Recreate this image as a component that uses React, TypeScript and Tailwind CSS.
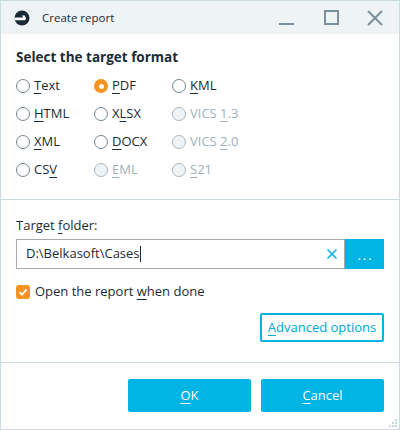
import React from "react";

const BLUE = "#00b4e4";

type Fmt = { label: string; key: number; checked?: boolean; disabled?: boolean };

const rows: Fmt[][] = [
  [{ label: "Text", key: 0 }, { label: "PDF", key: 0, checked: true }, { label: "KML", key: 0 }],
  [{ label: "HTML", key: 0 }, { label: "XLSX", key: 1 }, { label: "VICS 1.3", key: 5, disabled: true }],
  [{ label: "XML", key: 0 }, { label: "DOCX", key: 0 }, { label: "VICS 2.0", key: 5, disabled: true }],
  [{ label: "CSV", key: 2 }, { label: "EML", key: 0, disabled: true }, { label: "S21", key: 0, disabled: true }],
];

const Accel = ({ text, k }: { text: string; k: number }) => (
  <>
    {text.slice(0, k)}
    <span className="underline underline-offset-[3px] decoration-1">{text[k]}</span>
    {text.slice(k + 1)}
  </>
);

const Radio = ({ f }: { f: Fmt }) => (
  <label className={`flex items-center gap-[4px] h-[28px] ${f.disabled ? "text-[#9fb0ba]" : "text-[#1b2b36]"}`}>
    {f.checked ? (
      <span className="w-[14px] h-[14px] rounded-full bg-[#f7931e] flex items-center justify-center">
        <span className="w-[5px] h-[5px] rounded-full bg-white" />
      </span>
    ) : (
      <span
        className={`w-[14px] h-[14px] rounded-full border ${
          f.disabled ? "border-[#a8b8c1] bg-[#eef3f6]" : "border-[#6f8590] bg-white"
        }`}
      />
    )}
    <span>
      <Accel text={f.label} k={f.key} />
    </span>
  </label>
);

const Logo = () => (
  <svg width="16" height="16" viewBox="0 0 16 16">
    <circle cx="8" cy="8" r="7.5" fill="#1b2b36" />
    <path d="M0.4 7.6 L9.2 7.6 L7.8 5.4 L10.6 5.4 L12.2 8.6 L11 10.2 L0.8 10.2 Z" fill="#fff" />
  </svg>
);

export default function App() {
  return (
    <div
      className="w-[400px] h-[430px] bg-white border border-[#cbdbe2] flex flex-col text-[13px] text-[#1b2b36] relative"
      style={{ fontFamily: '"Open Sans", "Noto Sans", sans-serif' }}
    >
      {/* Title bar */}
      <div className="h-[33px] bg-[#eef3f6] flex items-center pl-[13px] shrink-0">
        <Logo />
        <span className="ml-[12px] text-[11.5px] text-[#1b2b36]">Create report</span>
        <div className="ml-auto flex items-center h-full">
          <div className="w-[45px] h-full flex items-center justify-center">
            <span className="block w-[15px] h-[2px] bg-[#7a919c] mt-[12px]" />
          </div>
          <div className="w-[45px] h-full flex items-center justify-center">
            <span className="block w-[15px] h-[15px] border-2 border-[#7a919c]" />
          </div>
          <div className="w-[45px] h-full flex items-center justify-center pr-[4px]">
            <svg width="16" height="16" viewBox="0 0 16 16">
              <path d="M1 1 L15 15 M15 1 L1 15" stroke="#7a919c" strokeWidth="2" />
            </svg>
          </div>
        </div>
      </div>

      {/* Format section */}
      <div className="px-[15px] pt-[13px] pb-[15px] border-b border-[#cbdbe2]">
        <div className="text-[13.5px] font-bold leading-[20px]">Select the target format</div>
        <div className="mt-[5px] grid grid-cols-[78px_78px_1fr]">
          {rows.flat().map((f) => (
            <Radio key={f.label} f={f} />
          ))}
        </div>
      </div>

      {/* Folder section */}
      <div className="px-[15px] pt-[16px] flex-1 flex flex-col border-b border-[#cbdbe2]">
        <div className="leading-[18px]">
          Target <Accel text="folder:" k={0} />
        </div>
        <div className="mt-[5px] flex h-[30px]">
          <div className="flex-1 flex items-center border border-[#a9a9a9] pl-[9px] pr-[6px]">
            <span>D:\Belkasoft\Cases</span>
            <span className="w-px h-[16px] bg-[#1b2b36]" />
            <svg className="ml-auto" width="12" height="12" viewBox="0 0 12 12">
              <path d="M1.5 1.5 L10.5 10.5 M10.5 1.5 L1.5 10.5" stroke={BLUE} strokeWidth="1.5" />
            </svg>
          </div>
          <button className="w-[39px] h-full bg-[#00b4e4] text-white text-[13px] leading-none tracking-[2px] pl-[2px] pt-[3px]">...</button>
        </div>
        <label className="mt-[13px] flex items-center gap-[5px] h-[20px]">
          <span className="w-[14px] h-[14px] rounded-[3px] bg-[#f7931e] flex items-center justify-center">
            <svg width="10" height="10" viewBox="0 0 10 10">
              <path d="M1.5 5.2 L4 7.6 L8.6 2.4" stroke="#fff" strokeWidth="1.8" fill="none" />
            </svg>
          </span>
          <span>
            Open the report <Accel text="when" k={0} /> done
          </span>
        </label>
        <div className="mt-[11px] flex justify-end">
          <button className="h-[29px] w-[124px] border-2 border-[#00b4e4] rounded-[2px] text-[#00a6d6] text-[13px]">
            <Accel text="Advanced options" k={0} />
          </button>
        </div>
      </div>

      {/* Buttons */}
      <div className="h-[66px] shrink-0 flex justify-end items-start pt-[16px] pr-[15px] gap-[10px]">
        <button className="w-[123px] h-[33px] bg-[#00b4e4] rounded-[2px] text-white text-[13px]">
          <Accel text="OK" k={0} />
        </button>
        <button className="w-[123px] h-[33px] bg-[#00b4e4] rounded-[2px] text-white text-[13px]">
          <Accel text="Cancel" k={0} />
        </button>
      </div>

      {/* Resize grip */}
      <svg className="absolute right-[2px] bottom-[2px]" width="8" height="8" viewBox="0 0 8 8">
        <rect x="6" y="0" width="2" height="2" fill="#c9d6dc" />
        <rect x="3" y="3" width="2" height="2" fill="#c9d6dc" />
        <rect x="6" y="3" width="2" height="2" fill="#c9d6dc" />
        <rect x="0" y="6" width="2" height="2" fill="#c9d6dc" />
        <rect x="3" y="6" width="2" height="2" fill="#c9d6dc" />
        <rect x="6" y="6" width="2" height="2" fill="#c9d6dc" />
      </svg>
    </div>
  );
}
